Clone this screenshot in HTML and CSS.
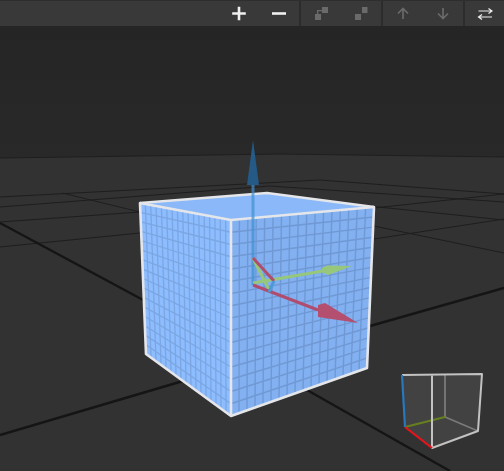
FILE: index.html
```html
<!DOCTYPE html>
<html lang="en">
<head>
    <meta charset="UTF-8">
    <title>viewport</title>
    <link rel="stylesheet" href="styles.css">
</head>
<body>
    <div class="viewer">
        <div class="toolbar">
            <div class="tool-group">
                <button class="tool-btn">
                    <svg width="16" height="16" viewBox="0 0 16 16"><path class="icon-bright" d="M1.200 8.500h13.600M8 1.700v13.600"/></svg>
                </button>
                <button class="tool-btn">
                    <svg width="16" height="16" viewBox="0 0 16 16"><path class="icon-bright" d="M1 8.500h14"/></svg>
                </button>
            </div>
            <div class="tool-group">
                <button class="tool-btn">
                    <svg width="16" height="16" viewBox="0 0 16 16"><path class="icon-fill" d="M2 9h6v6H2zM9 2h6v6H9zM4 9V5h5v1.300H5.300V9z"/></svg>
                </button>
                <button class="tool-btn">
                    <svg width="16" height="16" viewBox="0 0 16 16"><path class="icon-fill" d="M2 9h6v6H2zM9 2h5.500v6H9z"/></svg>
                </button>
            </div>
            <div class="tool-group">
                <button class="tool-btn">
                    <svg width="16" height="16" viewBox="0 0 16 16"><path class="icon-dim" d="M8 14V3.500M3 8.500l5-5 5 5"/></svg>
                </button>
                <button class="tool-btn">
                    <svg width="16" height="16" viewBox="0 0 16 16"><path class="icon-dim" d="M8 3v10.500M3 8.500l5 5 5-5"/></svg>
                </button>
            </div>
            <div class="tool-group tool-group-last">
                <button class="tool-btn">
                    <svg width="16" height="16" viewBox="0 0 16 16"><path class="icon-thin" d="M1.500 6H15M11.500 3.500 15 6l-3.500 2.500M15 12H1.500M5 9.500 1.500 12 5 14.500"/></svg>
                </button>
            </div>
        </div>
        <svg class="scene" viewBox="0 26 504 445" width="504" height="445">
            <defs>
                <linearGradient id="sky" x1="0" y1="0" x2="0" y2="1">
                    <stop offset="0" stop-color="#252525"/>
                    <stop offset="1" stop-color="#292929"/>
                </linearGradient>
            </defs>
            <rect x="0" y="26" width="504" height="135" fill="url(#sky)"/>
            <path class="ground" d="M0 158 280 154 504 157V471H0z"/>
            <path class="horizon" d="M0 158 280 154 504 157"/>

            <g class="floor-thin">
                <path d="M0 197 320 180 504 194"/>
                <path d="M0 207 270 186 504 202"/>
                <path d="M0 222 140 212"/>
                <path d="M0 247 140 233"/>
                <path d="M62 193 140 212"/>
                <path d="M340 203 504 220"/>
                <path d="M374 208 504 194"/>
                <path d="M374 239 504 219"/>
                <path d="M374 226 504 253"/>
            </g>
            <g class="floor-thick">
                <path d="M0 223 145 301"/>
                <path d="M307 390 450 471"/>
                <path d="M0 435 183 381"/>
                <path d="M370 326 504 288"/>
            </g>

            <g id="cube"></g>

            <g class="arrow-blue">
                <path class="shaft" d="M253 285V185"/>
                <path class="head" d="M253 140 259 185H247z"/>
            </g>
            <g class="arrow-green">
                <path class="shaft" d="M253 283 323 271M253 258 270 292"/>
                <path class="head" d="M352 266 327 265.500 322 268V272L328 275z"/>
            </g>
            <g class="arrow-red">
                <path class="shaft" d="M253 285 318 310M253 258 274 281"/>
                <path class="head" d="M358 323 318 317V305L325 303z"/>
            </g>
            <path class="plane-blue" d="M274 281 269 292"/>

            <path class="gizmo-fill" d="M402 375H482L478 431 432 448 405 427z"/>
            <g class="gizmo-back">
                <path d="M445 375V417L478 431"/>
            </g>
            <path class="gizmo-green" d="M405 427 445 417"/>
            <g class="gizmo-edge">
                <path d="M402 375 482 374 478 431 432 448V374"/>
            </g>
            <path class="gizmo-blue" d="M402 375 405 427"/>
            <path class="gizmo-red" d="M405 427 432 448"/>
        </svg>
    </div>
    <script src="scene.js"></script>
</body>
</html>
```

FILE: styles.css
```css
body,html{
    padding: 0;
    margin: 0;
    background-color: #303030;
}
.viewer{
    width: 504px;
    height: 471px;
    overflow: hidden;
}
.toolbar{
    display: flex;
    justify-content: flex-end;
    height: 26px;
    background-color: #393939;
    border-top: 1px solid #2e2e2e;
    box-sizing: border-box;
}
.tool-group{
    display: flex;
    width: 80px;
    margin-left: 2px;
}
.tool-group-last{
    width: 39px;
}
.tool-btn{
    flex: 1;
    display: flex;
    align-items: center;
    justify-content: center;
    padding: 0 0 1px;
    border: none;
    background: none;
}
.tool-group + .tool-group{
    box-shadow: -2px 0 0 #2c2c2c;
}
.icon-bright{
    fill: none;
    stroke: #f0f0f0;
    stroke-width: 2.6;
}
.icon-fill{
    fill: #6a6a6a;
}
.icon-dim{
    fill: none;
    stroke: #6a6a6a;
    stroke-width: 1.7;
}
.icon-thin{
    fill: none;
    stroke: #eeeeee;
    stroke-width: 1.2;
}
.scene{
    display: block;
}
.ground{
    fill: #323232;
}
.horizon{
    fill: none;
    stroke: #1f1f1f;
    stroke-width: 1;
}
.floor-thin path{
    fill: none;
    stroke: #1e1e1e;
    stroke-width: 1;
}
.floor-thick path{
    fill: none;
    stroke: #151515;
    stroke-width: 2.4;
}
.face-left{
    fill: #8dbdff;
}
.face-right{
    fill: #82b0f0;
}
.face-top{
    fill: #8ab8f8;
}
.grid-left{
    stroke: #7ba6e2;
    stroke-width: 1.3;
}
.grid-right{
    stroke: #7099d4;
    stroke-width: 1.4;
}
.cube-edge{
    fill: none;
    stroke: #e4e6ea;
    stroke-width: 2.6;
    stroke-linejoin: round;
}
.shaft{
    fill: none;
    stroke-width: 3;
}
.arrow-blue .shaft{
    stroke: #3f8fd2;
    stroke-opacity: .7;
}
.arrow-blue .head{
    fill: #255a86;
}
.arrow-green .shaft{
    stroke: #97c77a;
}
.arrow-green .head{
    fill: #97c77a;
}
.arrow-red .shaft{
    stroke: #b04d6e;
}
.arrow-red .head{
    fill: #b54f70;
}
.plane-blue{
    fill: none;
    stroke: #4a9ad8;
    stroke-width: 3;
}
.gizmo-fill{
    fill: #ffffff;
    fill-opacity: .08;
}
.gizmo-back path{
    fill: none;
    stroke: #7a7a7a;
    stroke-width: 1.8;
}
.gizmo-edge path{
    fill: none;
    stroke: #c2c2c2;
    stroke-width: 2;
    stroke-linejoin: round;
}
.gizmo-blue,.gizmo-red,.gizmo-green{
    fill: none;
    stroke-width: 2.2;
}
.gizmo-blue{
    stroke: #2878bd;
}
.gizmo-red{
    stroke: #e8141c;
}
.gizmo-green{
    stroke: #66801f;
}
```

FILE: scene.js
```js
const NS = 'http://www.w3.org/2000/svg'
const cube = document.getElementById('cube')
const COLS = 17
const ROWS = 16

// corners read off the picture
const leftTop = [140,203], frontTop = [231,220], rightTop = [374,207], backTop = [267,193]
const leftBottom = [146,354], frontBottom = [231,416], rightBottom = [367,368]

const add = (tag,cls,attrs)=>{
    const node = document.createElementNS(NS,tag)
    node.setAttribute('class',cls)
    Object.keys(attrs).forEach(k=>node.setAttribute(k,attrs[k]))
    cube.appendChild(node)
}
const lerp = (a,b,t)=>[a[0]+(b[0]-a[0])*t,a[1]+(b[1]-a[1])*t]
const pts = list=>list.map(p=>p.join(',')).join(' ')

const face = (a,b,c,d,faceCls,gridCls)=>{
    add('polygon',faceCls,{points:pts([a,b,c,d])})
    for(let i=1;i<COLS;i++){
        const v1 = lerp(a,b,i/COLS), v2 = lerp(d,c,i/COLS)
        add('line',gridCls,{x1:v1[0],y1:v1[1],x2:v2[0],y2:v2[1]})
    }
    for(let i=1;i<ROWS;i++){
        const h1 = lerp(a,d,i/ROWS), h2 = lerp(b,c,i/ROWS)
        add('line',gridCls,{x1:h1[0],y1:h1[1],x2:h2[0],y2:h2[1]})
    }
}

face(leftTop,frontTop,frontBottom,leftBottom,'face-left','grid-left')
face(frontTop,rightTop,rightBottom,frontBottom,'face-right','grid-right')
add('polygon','face-top',{points:pts([leftTop,backTop,rightTop,frontTop])})
add('polygon','cube-edge',{points:pts([leftTop,backTop,rightTop,rightBottom,frontBottom,leftBottom])})
add('polyline','cube-edge',{points:pts([leftTop,frontTop,rightTop])})
add('polyline','cube-edge',{points:pts([frontTop,frontBottom])})
```
